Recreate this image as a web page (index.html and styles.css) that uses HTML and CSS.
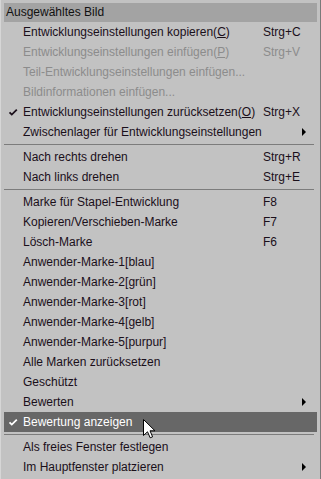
FILE: index.html
```html
<!DOCTYPE html>
<html lang="de">
<head>
    <meta charset="UTF-8">
    <title>Ausgewähltes Bild</title>
    <link rel="stylesheet" href="styles.css">
</head>
<body>
    <div class="menu">
        <div class="menu-title">Ausgewähltes Bild</div>

        <div class="item"><span class="label">Entwicklungseinstellungen kopieren(<u>C</u>)</span><span class="key">Strg+C</span></div>
        <div class="item disabled"><span class="label">Entwicklungseinstellungen einfügen(<u>P</u>)</span><span class="key">Strg+V</span></div>
        <div class="item disabled"><span class="label">Teil-Entwicklungseinstellungen einfügen...</span></div>
        <div class="item disabled"><span class="label">Bildinformationen einfügen...</span></div>
        <div class="item">
            <svg class="check" width="19" height="20" viewBox="0 0 19 20"><path d="M5.5 10.3 L7.8 12.6 L12.8 7.6" fill="none" stroke="currentColor" stroke-width="1.8"/></svg>
            <span class="label">Entwicklungseinstellungen zurücksetzen(<u>O</u>)</span><span class="key">Strg+X</span>
        </div>
        <div class="item sub"><span class="label">Zwischenlager für Entwicklungseinstellungen</span></div>
        <div class="sep"></div>

        <div class="item"><span class="label">Nach rechts drehen</span><span class="key">Strg+R</span></div>
        <div class="item"><span class="label">Nach links drehen</span><span class="key">Strg+E</span></div>
        <div class="sep"></div>

        <div class="item"><span class="label">Marke für Stapel-Entwicklung</span><span class="key">F8</span></div>
        <div class="item"><span class="label">Kopieren/Verschieben-Marke</span><span class="key">F7</span></div>
        <div class="item"><span class="label">Lösch-Marke</span><span class="key">F6</span></div>
        <div class="item"><span class="label">Anwender-Marke-1[blau]</span></div>
        <div class="item"><span class="label">Anwender-Marke-2[grün]</span></div>
        <div class="item"><span class="label">Anwender-Marke-3[rot]</span></div>
        <div class="item"><span class="label">Anwender-Marke-4[gelb]</span></div>
        <div class="item"><span class="label">Anwender-Marke-5[purpur]</span></div>
        <div class="item"><span class="label">Alle Marken zurücksetzen</span></div>
        <div class="item"><span class="label">Geschützt</span></div>
        <div class="item sub"><span class="label">Bewerten</span></div>
        <div class="item active">
            <svg class="check" width="19" height="20" viewBox="0 0 19 20"><path d="M5.5 10.3 L7.8 12.6 L12.8 7.6" fill="none" stroke="currentColor" stroke-width="1.8"/></svg>
            <span class="label">Bewertung anzeigen</span>
            <svg class="cursor" width="13" height="20" viewBox="0 0 13 20">
                <path d="M0.5 0.5 L0.5 16.5 L4.5 12.8 L7.2 18.8 L9.6 17.8 L7 11.8 L12 11.8 Z" fill="#fff" stroke="#000" stroke-width="1"/>
            </svg>
        </div>
        <div class="sep"></div>

        <div class="item"><span class="label">Als freies Fenster festlegen</span></div>
        <div class="item sub"><span class="label">Im Hauptfenster platzieren</span></div>
    </div>
</body>
</html>
```

FILE: styles.css
```css
html, body {
    margin: 0;
    padding: 0;
    background-color: #c0c0c0;
}
.menu {
    width: 321px;
    height: 479px;
    box-sizing: border-box;
    padding: 3px 3px 1px 3px;
    background-color: #c2c2c2;
    border-left: 1px solid #d6d6d6;
    border-right: 1px solid #7a7a7a;
    font-family: "Liberation Sans", Arial, sans-serif;
    font-size: 12px;
    color: #1a0f1a;
}
.menu-title {
    height: 19px;
    line-height: 19px;
    padding-left: 2px;
    background-color: #a3a3a3;
    color: #111;
}
.item {
    position: relative;
    display: flex;
    align-items: center;
    height: 20px;
    padding-left: 19px;
}
.item .label {
    flex: 1;
    white-space: nowrap;
}
.item .key {
    width: 54px;
    white-space: nowrap;
}
.item.disabled {
    color: #8c8c8c;
}
/* Haken vor aktivierten Einträgen */
.check {
    position: absolute;
    left: 0;
    top: 0;
}
/* Pfeil für Untermenüs */
.item.sub::after {
    content: "";
    position: absolute;
    right: 11px;
    top: 6px;
    border-top: 4px solid transparent;
    border-bottom: 4px solid transparent;
    border-left: 4px solid #000;
}
.item.active {
    background-color: #676767;
    color: #fff;
}
.cursor {
    position: absolute;
    left: 139px;
    top: 7px;
}
.sep {
    height: 5px;
    display: flex;
    align-items: center;
    padding-right: 3px;
}
.sep::before {
    content: "";
    flex: 1;
    height: 1px;
    margin-top: -1px;
    background-color: #7c7c7c;
}
```
